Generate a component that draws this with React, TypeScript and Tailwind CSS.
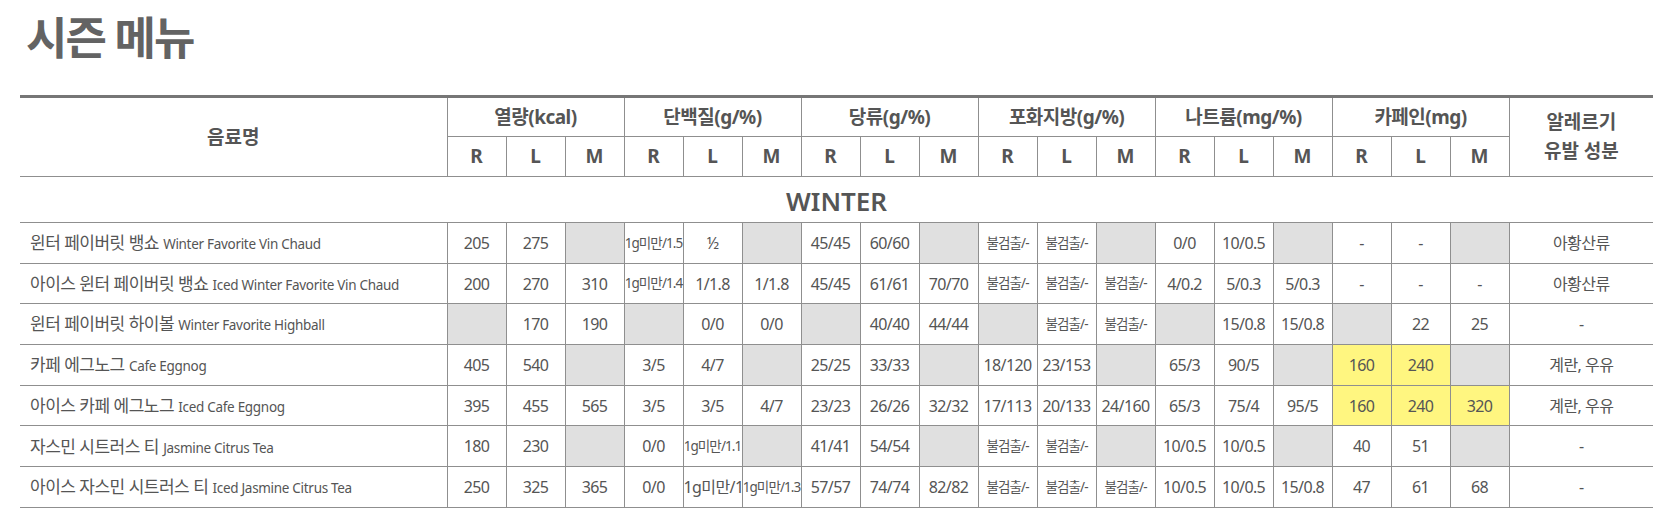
import React from "react";

type Cell = string | null;

interface MenuRow {
  ko: string;
  en: string;
  cells: Cell[];
  allergy: string;
  yellow?: number[];
}

const groups = ["열량(kcal)", "단백질(g/%)", "당류(g/%)", "포화지방(g/%)", "나트륨(mg/%)", "카페인(mg)"];

const rows: MenuRow[] = [
  {
    ko: "윈터 페이버릿 뱅쇼",
    en: "Winter Favorite Vin Chaud",
    cells: ["205", "275", null, "1g미만/1.5", "½", null, "45/45", "60/60", null, "불검출/-", "불검출/-", null, "0/0", "10/0.5", null, "-", "-", null],
    allergy: "아황산류",
  },
  {
    ko: "아이스 윈터 페이버릿 뱅쇼",
    en: "Iced Winter Favorite Vin Chaud",
    cells: ["200", "270", "310", "1g미만/1.4", "1/1.8", "1/1.8", "45/45", "61/61", "70/70", "불검출/-", "불검출/-", "불검출/-", "4/0.2", "5/0.3", "5/0.3", "-", "-", "-"],
    allergy: "아황산류",
  },
  {
    ko: "윈터 페이버릿 하이볼",
    en: "Winter Favorite Highball",
    cells: [null, "170", "190", null, "0/0", "0/0", null, "40/40", "44/44", null, "불검출/-", "불검출/-", null, "15/0.8", "15/0.8", null, "22", "25"],
    allergy: "-",
  },
  {
    ko: "카페 에그노그",
    en: "Cafe Eggnog",
    cells: ["405", "540", null, "3/5", "4/7", null, "25/25", "33/33", null, "18/120", "23/153", null, "65/3", "90/5", null, "160", "240", null],
    allergy: "계란, 우유",
    yellow: [15, 16],
  },
  {
    ko: "아이스 카페 에그노그",
    en: "Iced Cafe Eggnog",
    cells: ["395", "455", "565", "3/5", "3/5", "4/7", "23/23", "26/26", "32/32", "17/113", "20/133", "24/160", "65/3", "75/4", "95/5", "160", "240", "320"],
    allergy: "계란, 우유",
    yellow: [15, 16, 17],
  },
  {
    ko: "자스민 시트러스 티",
    en: "Jasmine Citrus Tea",
    cells: ["180", "230", null, "0/0", "1g미만/1.1", null, "41/41", "54/54", null, "불검출/-", "불검출/-", null, "10/0.5", "10/0.5", null, "40", "51", null],
    allergy: "-",
  },
  {
    ko: "아이스 자스민 시트러스 티",
    en: "Iced Jasmine Citrus Tea",
    cells: ["250", "325", "365", "0/0", "1g미만/1", "1g미만/1.3", "57/57", "74/74", "82/82", "불검출/-", "불검출/-", "불검출/-", "10/0.5", "10/0.5", "15/0.8", "47", "61", "68"],
    allergy: "-",
  },
];

// small condensed text for the long values
const isSmall = (v: string) => v.includes("불검출") || /미만\/1\./.test(v);

export default function App() {
  const line = "border-[#8f8f8f]";
  return (
    <div
      className="bg-white w-[1676px] h-[510px] overflow-hidden pl-[20px] text-[#555]"
      style={{ fontFamily: '"Noto Sans", "Noto Sans CJK KR", sans-serif' }}
    >
      <h1 className="pt-[15px] pl-[6px] text-[45px] leading-[45px] font-bold tracking-[-2px] text-[#636363]">
        시즌 메뉴
      </h1>

      <table className="mt-[35px] w-[1633px] table-fixed border-collapse">
        <colgroup>
          <col className="w-[427px]" />
          {Array.from({ length: 18 }).map((_, i) => (
            <col key={i} className="w-[59px]" />
          ))}
          <col className="w-[144px]" />
        </colgroup>
        <thead>
          <tr className="h-[40px] text-[19px] font-bold">
            <th rowSpan={2} className={`border-t-[3px] border-t-[#767676] border-r border-b ${line}`}>
              음료명
            </th>
            {groups.map((g) => (
              <th key={g} colSpan={3} className={`border-t-[3px] border-t-[#767676] border-x border-b ${line} tracking-[-0.5px]`}>
                {g}
              </th>
            ))}
            <th rowSpan={2} className={`border-t-[3px] border-t-[#767676] border-l border-b ${line} leading-[29px]`}>
              알레르기
              <br />
              유발 성분
            </th>
          </tr>
          <tr className="h-[40px] text-[19px] font-bold">
            {groups.map((g) =>
              ["R", "L", "M"].map((s) => (
                <th key={g + s} className={`border ${line}`}>
                  {s}
                </th>
              ))
            )}
          </tr>
        </thead>
        <tbody>
          <tr className="h-[46px]">
            <td colSpan={20} className={`border-y ${line} text-center text-[26px] font-semibold pt-[4px]`}>
              WINTER
            </td>
          </tr>
          {rows.map((r) => (
            <tr key={r.ko} className="h-[40.7px]">
              <td className={`border-y border-r ${line} pl-[10px] whitespace-nowrap`}>
                <span className="text-[17px] tracking-[-0.5px]">{r.ko}</span>{" "}
                <span className="text-[13.5px] tracking-[-0.3px]">{r.en}</span>
              </td>
              {r.cells.map((c, i) => {
                const yellow = r.yellow?.includes(i);
                const bg = c === null ? "bg-[#e0e0e0]" : yellow ? "bg-[#fff680]" : "";
                const size = c && isSmall(c) ? "text-[13.5px] tracking-[-0.9px]" : "text-[16px] tracking-[-0.6px]";
                return (
                  <td key={i} className={`border ${line} ${bg} ${size} text-center whitespace-nowrap px-0`}>
                    {c}
                  </td>
                );
              })}
              <td className={`border-y border-l ${line} text-center text-[16px] tracking-[-0.5px]`}>{r.allergy}</td>
            </tr>
          ))}
        </tbody>
      </table>
    </div>
  );
}
